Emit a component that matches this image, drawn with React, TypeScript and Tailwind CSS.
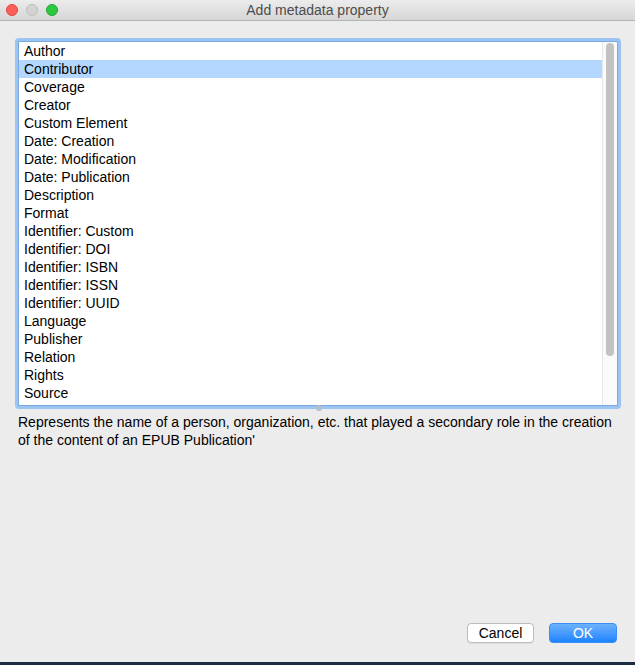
import React from 'react';

const items = [
  'Author',
  'Contributor',
  'Coverage',
  'Creator',
  'Custom Element',
  'Date: Creation',
  'Date: Modification',
  'Date: Publication',
  'Description',
  'Format',
  'Identifier: Custom',
  'Identifier: DOI',
  'Identifier: ISBN',
  'Identifier: ISSN',
  'Identifier: UUID',
  'Language',
  'Publisher',
  'Relation',
  'Rights',
  'Source',
  'Subject',
  'Title',
  'Type',
];

export default function App() {
  const selected = 'Contributor';

  return (
    <div
      className="w-[635px] h-[665px] flex flex-col bg-[#ececec] text-[14px] text-black overflow-hidden"
      style={{ fontFamily: '"Liberation Sans", Arial, sans-serif' }}
    >
      {/* title bar */}
      <div className="relative h-[21px] shrink-0 flex items-center justify-center bg-gradient-to-b from-[#ececec] to-[#d6d6d6] border-b border-[#b4b4b4]">
        <div className="absolute left-[6px] top-[4px] flex gap-[8px]">
          <span className="w-[12px] h-[12px] rounded-full bg-[#fc5f57] border border-[#e2463f]" />
          <span className="w-[12px] h-[12px] rounded-full bg-[#d3d3d3] border border-[#bdbdbd]" />
          <span className="w-[12px] h-[12px] rounded-full bg-[#2bc840] border border-[#1fa831]" />
        </div>
        <span className="text-[#4d4d4d] leading-none">Add metadata property</span>
      </div>

      <div className="flex-1 flex flex-col">
        {/* list */}
        <div className="relative ml-[15px] mt-[17px] w-[606px] h-[371px] rounded-[4px] border-[3px] border-[#9cc4f3]">
          <div className="h-full flex bg-white border border-[#7ba8df] overflow-hidden">
            <div className="flex-1 overflow-hidden">
              {items.map((item) => (
                <div
                  key={item}
                  className={
                    'h-[18px] leading-[19px] pl-[5px] ' +
                    (item === selected ? 'bg-[#b3d7ff]' : '')
                  }
                >
                  {item}
                </div>
              ))}
            </div>
            <div className="w-[15px] shrink-0 bg-[#fafafa] border-l border-[#e6e6e6] pt-[1px] flex justify-center">
              <div className="w-[8px] h-[313px] rounded-full bg-[#c2c2c2]" />
            </div>
          </div>
          <span className="absolute left-[298px] bottom-[-5px] w-[6px] h-[6px] rounded-full bg-[#b3bfcc]" />
        </div>

        <p className="ml-[18px] mt-[4px] w-[600px] leading-[18px]">
          Represents the name of a person, organization, etc. that played a secondary role in the creation of the
          content of an EPUB Publication'
        </p>

        <div className="flex-1" />

        <div className="flex justify-end gap-[15px] pr-[18px] pb-[19px]">
          <button className="w-[67px] h-[20px] rounded-[4px] bg-white border border-[#bcbcbc] text-black leading-none shadow-[0_1px_0_rgba(0,0,0,0.05)]">
            Cancel
          </button>
          <button className="w-[68px] h-[20px] rounded-[4px] bg-gradient-to-b from-[#6bb2fb] to-[#1a83fd] border border-[#3a8ef5] text-white leading-none">
            OK
          </button>
        </div>
      </div>

      <div className="h-[3px] shrink-0 bg-[#1d2c42]" />
    </div>
  );
}
